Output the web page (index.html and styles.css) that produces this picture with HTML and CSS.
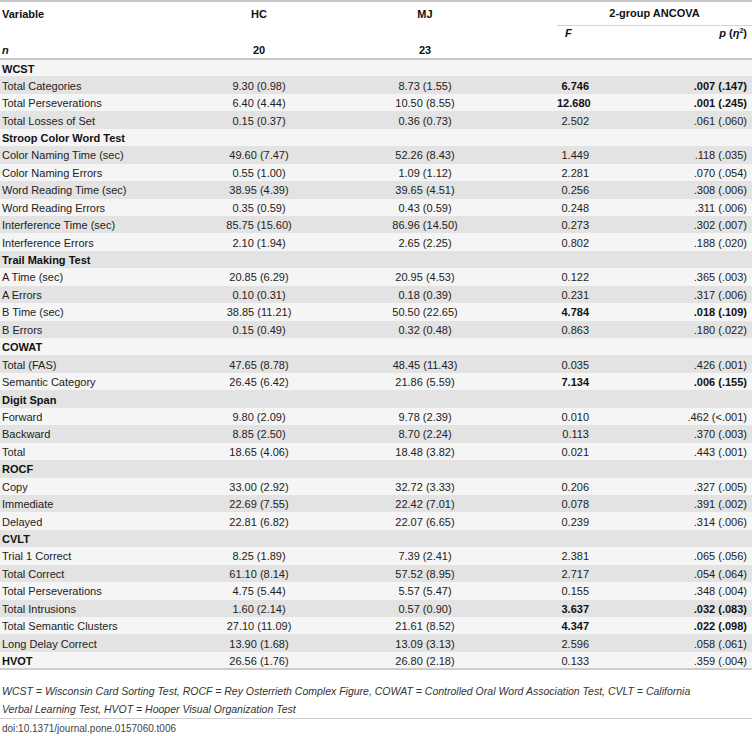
FILE: index.html
```html
<!DOCTYPE html>
<html lang="en">
<head>
    <meta charset="UTF-8">
    <meta name="viewport" content="width=device-width, initial-scale=1.0">
    <title>Table 6 - Neuropsychological test results</title>
    <link rel="stylesheet" href="styles.css">
</head>
<body>
    <table class="results">
        <colgroup>
            <col class="c-var">
            <col class="c-hc">
            <col class="c-mj">
            <col class="c-gap">
            <col class="c-f">
            <col class="c-p">
        </colgroup>
        <thead>
            <tr class="head-top">
                <th class="var">Variable</th>
                <th>HC</th>
                <th>MJ</th>
                <th></th>
                <th colspan="2" class="ancova">2-group ANCOVA</th>
            </tr>
            <tr class="head-bottom">
                <th class="var low"><i>n</i></th>
                <th class="low">20</th>
                <th class="low">23</th>
                <th></th>
                <th class="f-head"><i>F</i></th>
                <th class="p-head"><i>p</i> (<i>η</i><sup>2</sup>)</th>
            </tr>
        </thead>
        <tbody>
            <tr class="sec"><td>WCST</td><td></td><td></td><td></td><td></td><td></td></tr>
            <tr><td>Total Categories</td><td>9.30 (0.98)</td><td>8.73 (1.55)</td><td></td><td class="f b">6.746</td><td class="p b">.007 (.147)</td></tr>
            <tr><td>Total Perseverations</td><td>6.40 (4.44)</td><td>10.50 (8.55)</td><td></td><td class="f b">12.680</td><td class="p b">.001 (.245)</td></tr>
            <tr><td>Total Losses of Set</td><td>0.15 (0.37)</td><td>0.36 (0.73)</td><td></td><td class="f">2.502</td><td class="p">.061 (.060)</td></tr>
            <tr class="sec"><td>Stroop Color Word Test</td><td></td><td></td><td></td><td></td><td></td></tr>
            <tr><td>Color Naming Time (sec)</td><td>49.60 (7.47)</td><td>52.26 (8.43)</td><td></td><td class="f">1.449</td><td class="p">.118 (.035)</td></tr>
            <tr><td>Color Naming Errors</td><td>0.55 (1.00)</td><td>1.09 (1.12)</td><td></td><td class="f">2.281</td><td class="p">.070 (.054)</td></tr>
            <tr><td>Word Reading Time (sec)</td><td>38.95 (4.39)</td><td>39.65 (4.51)</td><td></td><td class="f">0.256</td><td class="p">.308 (.006)</td></tr>
            <tr><td>Word Reading Errors</td><td>0.35 (0.59)</td><td>0.43 (0.59)</td><td></td><td class="f">0.248</td><td class="p">.311 (.006)</td></tr>
            <tr><td>Interference Time (sec)</td><td>85.75 (15.60)</td><td>86.96 (14.50)</td><td></td><td class="f">0.273</td><td class="p">.302 (.007)</td></tr>
            <tr><td>Interference Errors</td><td>2.10 (1.94)</td><td>2.65 (2.25)</td><td></td><td class="f">0.802</td><td class="p">.188 (.020)</td></tr>
            <tr class="sec"><td>Trail Making Test</td><td></td><td></td><td></td><td></td><td></td></tr>
            <tr><td>A Time (sec)</td><td>20.85 (6.29)</td><td>20.95 (4.53)</td><td></td><td class="f">0.122</td><td class="p">.365 (.003)</td></tr>
            <tr><td>A Errors</td><td>0.10 (0.31)</td><td>0.18 (0.39)</td><td></td><td class="f">0.231</td><td class="p">.317 (.006)</td></tr>
            <tr><td>B Time (sec)</td><td>38.85 (11.21)</td><td>50.50 (22.65)</td><td></td><td class="f b">4.784</td><td class="p b">.018 (.109)</td></tr>
            <tr><td>B Errors</td><td>0.15 (0.49)</td><td>0.32 (0.48)</td><td></td><td class="f">0.863</td><td class="p">.180 (.022)</td></tr>
            <tr class="sec"><td>COWAT</td><td></td><td></td><td></td><td></td><td></td></tr>
            <tr><td>Total (FAS)</td><td>47.65 (8.78)</td><td>48.45 (11.43)</td><td></td><td class="f">0.035</td><td class="p">.426 (.001)</td></tr>
            <tr><td>Semantic Category</td><td>26.45 (6.42)</td><td>21.86 (5.59)</td><td></td><td class="f b">7.134</td><td class="p b">.006 (.155)</td></tr>
            <tr class="sec"><td>Digit Span</td><td></td><td></td><td></td><td></td><td></td></tr>
            <tr><td>Forward</td><td>9.80 (2.09)</td><td>9.78 (2.39)</td><td></td><td class="f">0.010</td><td class="p">.462 (&lt;.001)</td></tr>
            <tr><td>Backward</td><td>8.85 (2.50)</td><td>8.70 (2.24)</td><td></td><td class="f">0.113</td><td class="p">.370 (.003)</td></tr>
            <tr><td>Total</td><td>18.65 (4.06)</td><td>18.48 (3.82)</td><td></td><td class="f">0.021</td><td class="p">.443 (.001)</td></tr>
            <tr class="sec"><td>ROCF</td><td></td><td></td><td></td><td></td><td></td></tr>
            <tr><td>Copy</td><td>33.00 (2.92)</td><td>32.72 (3.33)</td><td></td><td class="f">0.206</td><td class="p">.327 (.005)</td></tr>
            <tr><td>Immediate</td><td>22.69 (7.55)</td><td>22.42 (7.01)</td><td></td><td class="f">0.078</td><td class="p">.391 (.002)</td></tr>
            <tr><td>Delayed</td><td>22.81 (6.82)</td><td>22.07 (6.65)</td><td></td><td class="f">0.239</td><td class="p">.314 (.006)</td></tr>
            <tr class="sec"><td>CVLT</td><td></td><td></td><td></td><td></td><td></td></tr>
            <tr><td>Trial 1 Correct</td><td>8.25 (1.89)</td><td>7.39 (2.41)</td><td></td><td class="f">2.381</td><td class="p">.065 (.056)</td></tr>
            <tr><td>Total Correct</td><td>61.10 (8.14)</td><td>57.52 (8.95)</td><td></td><td class="f">2.717</td><td class="p">.054 (.064)</td></tr>
            <tr><td>Total Perseverations</td><td>4.75 (5.44)</td><td>5.57 (5.47)</td><td></td><td class="f">0.155</td><td class="p">.348 (.004)</td></tr>
            <tr><td>Total Intrusions</td><td>1.60 (2.14)</td><td>0.57 (0.90)</td><td></td><td class="f b">3.637</td><td class="p b">.032 (.083)</td></tr>
            <tr><td>Total Semantic Clusters</td><td>27.10 (11.09)</td><td>21.61 (8.52)</td><td></td><td class="f b">4.347</td><td class="p b">.022 (.098)</td></tr>
            <tr><td>Long Delay Correct</td><td>13.90 (1.68)</td><td>13.09 (3.13)</td><td></td><td class="f">2.596</td><td class="p">.058 (.061)</td></tr>
            <tr><td class="var-b">HVOT</td><td>26.56 (1.76)</td><td>26.80 (2.18)</td><td></td><td class="f">0.133</td><td class="p">.359 (.004)</td></tr>
        </tbody>
    </table>

    <p class="note">WCST = Wisconsin Card Sorting Test, ROCF = Rey Osterrieth Complex Figure, COWAT = Controlled Oral Word Association Test, CVLT = California Verbal Learning Test, HVOT = Hooper Visual Organization Test</p>

    <p class="doi">doi:10.1371/journal.pone.0157060.t006</p>
</body>
</html>
```

FILE: styles.css
```css
/* Table layout modeled on a journal table view */
* { box-sizing: border-box; }
body { margin: 0; background: #fff; color: #222; font-family: "Liberation Sans", Arial, sans-serif; font-size: 11px; }

.results { width: 752px; border-collapse: collapse; table-layout: fixed; border-top: 2px solid #c6c6c6; }
.c-var { width: 170px; }
.c-hc { width: 178px; }
.c-mj { width: 154px; }
.c-gap { width: 55px; }
.c-f { width: 43px; }
.c-p { width: 152px; }

/* header */
.results th { font-weight: bold; color: #111; text-align: center; padding: 0; }
.results th.var { text-align: left; padding-left: 2px; }
.head-top th { height: 24px; vertical-align: middle; }
.head-top th.ancova { border-bottom: 1px solid #d4d4d4; }
.head-bottom th { height: 34px; vertical-align: top; padding-top: 1px; border-bottom: 2px solid #c6c6c6; }
.head-bottom th.low { vertical-align: bottom; padding-bottom: 2px; }
.head-bottom th.f-head { text-align: left; padding-left: 8px; }
.head-bottom th.p-head { text-align: right; padding-right: 5px; }
.head-bottom sup { font-size: 7px; vertical-align: 4px; }

/* body rows */
.results td { height: 17.45px; padding: 1px 0 0; text-align: center; white-space: nowrap; }
.results td:first-child { text-align: left; padding-left: 2px; }
.results tbody tr { background: #f5f5f5; }
.results tbody tr:nth-child(even) { background: #e3e3e3; }
.results tbody tr:last-child td { border-bottom: 2px solid #cdcdcd; }
.results td.f { text-align: right; padding-right: 11px; }
.results td.p { text-align: right; padding-right: 5px; }
.results td.b, .sec td, .var-b { font-weight: bold; color: #111; }

/* footnote and doi */
.note { margin: 0; padding: 12px 2px 0 2px; font-size: 10.5px; font-style: italic; line-height: 18px; color: #333; max-width: 700px; }
.doi { margin: 0; padding: 4px 2px 2px; font-size: 10px; line-height: 12px; color: #444; border-top: 1px solid #cfcfcf; }
```
